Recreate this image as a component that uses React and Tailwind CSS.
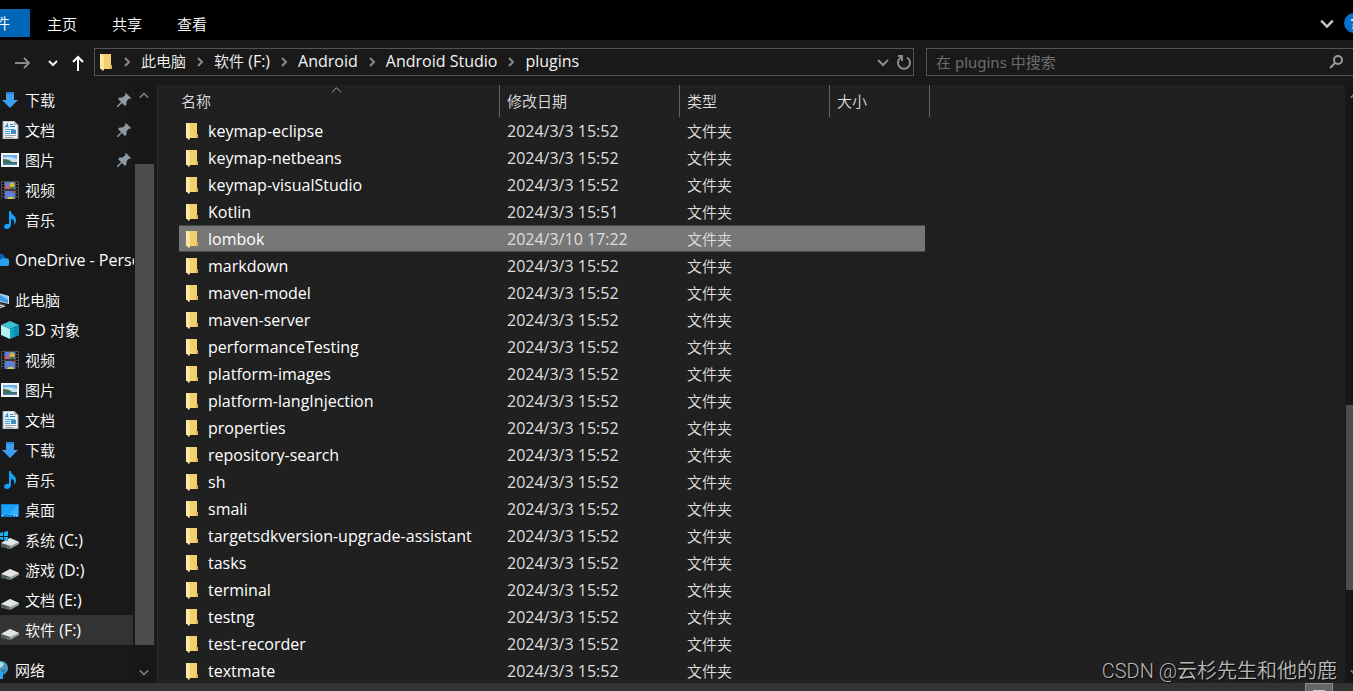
import { useState } from "react";

/* ── Icons ── */
const FolderI = () => (
  <svg width={14} height={18} viewBox="0 0 14 18" className="block shrink-0">
    <path d="M1 1h11v11h1v4H1z" fill="#f3cf6d"/>
    <path d="M1 1h3l1 14-1 3-3-3z" fill="#fde9a6"/>
    <path d="M11 12h2v4h-2z" fill="#dcb257"/>
    <path d="M4 3l1 1v12l-1 2-1-2z" fill="#ffe49a"/>
  </svg>
);
const DownloadI = () => (
  <svg width={18} height={18} viewBox="0 0 18 18">
    <path d="M5 1h8v8h4l-8 8-8-8h4z" fill="#3f9df0"/>
    <path d="M5 1h8v2H5z" fill="#2c83d8"/>
  </svg>
);
const DocI = () => (
  <svg width={18} height={18} viewBox="0 0 18 18">
    <path d="M2 0h11l4 4v14H2z" fill="#eef2f4"/>
    <path d="M2 0h11l4 4v14H2z" fill="none" stroke="#9aa3a8"/>
    <path d="M13 0v4h4z" fill="#a9b3b8"/>
    <path d="M4 6.5L6.500 2.500 7 6.500M5 5.500h2M9 3.500h3M9 5.500h5" stroke="#2384d6" fill="none"/>
    <path d="M4 8.500h10M4 10.500h5M4 12.500h5" stroke="#44a0df"/>
    <path d="M10 9h5v4h-5z" fill="#3f8fbe"/>
    <path d="M4 14.500h11M4 16.500h8" stroke="#99a2a7"/>
  </svg>
);
const PictureI = () => (
  <svg width={18} height={18} viewBox="0 0 18 18">
    <path d="M0 2h18v14H0z" fill="#f4f5f5"/>
    <path d="M2 4h14v10H2z" fill="#6aaeea"/>
    <path d="M2 7q5-3 14 1v3H2z" fill="#c6e2f3"/>
    <path d="M2 8q6 0 9 3h5v2H2z" fill="#3e7158"/>
    <path d="M2 12.500h14V14H2z" fill="#457fb8"/>
  </svg>
);
const VideoI = () => (
  <svg width={18} height={18} viewBox="0 0 18 18">
    <path d="M0 0h18v18H0z" fill="#4a4a4a"/>
    <path d="M2 1v17M16 1v17" stroke="#151515" strokeWidth={2} strokeDasharray="2 1"/>
    <path d="M4 1h10v7H4zM4 10h10v8H4z" fill="#5580de"/>
    <circle cx="11" cy="4" r="2.500" fill="#d9b52c"/>
    <path d="M4 5h4v3H4z" fill="#e2565f"/>
    <path d="M9 6h4v2H9z" fill="#3c7a36"/>
    <path d="M11 10h3l-2 3z" fill="#d1452d"/>
    <path d="M6 18q2-3 4-2 2-1 3 2z" fill="#e8c33d"/>
    <path d="M4 9h10" stroke="#222"/>
  </svg>
);
const MusicI = () => (
  <svg width={18} height={18} viewBox="0 0 18 18">
    <path d="M8 0h2c0 4 5 4 5 9 0 2-1 4-2 5 1-4-1-6-3-6v6c0 2-2 4-4 4s-3-1-3-2.500C3 13.500 6 12 8 13z" fill="#16a0f5"/>
  </svg>
);
const CloudI = () => (
  <svg width={18} height={18} viewBox="0 0 18 18">
    <path d="M0 8a5 5 0 0 1 8-5c4-1 6 2 6 5L3 14z" fill="#0a63b8"/>
    <path d="M4 15l5-6c3-3 10-2 10 2a4 4 0 0 1-4 4z" fill="#28a0ec"/>
  </svg>
);
const PcI = () => (
  <svg width={18} height={18} viewBox="0 0 18 18">
    <path d="M0 0l18 5v8L0 9z" fill="#d7dde1"/>
    <path d="M0 1l17 5v6L0 8z" fill="#3a9be6"/>
    <path d="M8 3l9 3v3z" fill="#8fcaf5"/>
    <path d="M5 12l10 3-7 3-8-2z" fill="#c9ced2"/>
    <path d="M3 14l8 2M7 12l7 2" stroke="#4d5356"/>
  </svg>
);
const CubeI = () => (
  <svg width={18} height={18} viewBox="0 0 18 18">
    <path d="M9 0l9 4-9 4-9-4z" fill="#3cc0d3"/>
    <path d="M0 4l9 4v10l-9-4z" fill="#b8eff3"/>
    <path d="M18 4l-9 4v10l9-4z" fill="#0fa6c9"/>
    <path d="M13 6l5-2v10l-5 2z" fill="#0b8fb8"/>
  </svg>
);
const DesktopI = () => (
  <svg width={18} height={18} viewBox="0 0 18 18">
    <path d="M0 3h18v13H0z" fill="#0a84d8"/>
    <path d="M1 4h16v10H1z" fill="#1ba1f8"/>
    <path d="M17 4v10H7z" fill="#38b2fc"/>
    <path d="M1 14.500h1M13 14.500h1M15 14.500h1" stroke="#fff"/>
  </svg>
);
const DriveI = () => (
  <svg width={18} height={18} viewBox="0 0 18 18" className="overflow-visible">
    <path d="M0 13l9-5 9 4v2l-9 5-9-3z" fill="#9b9fa1"/>
    <path d="M0 13l9-5 9 4-9 4z" fill="#e2e4e5"/>
    <path d="M0 13l9 3v3l-9-2z" fill="#55595b"/>
    <path d="M6 17h2" stroke="#3fd16b" strokeWidth={1}/>
  </svg>
);
const SysDriveI = () => (
  <svg width={18} height={18} viewBox="0 0 18 18" className="overflow-visible">
    <path d="M0 12l9-5 9 4v2l-9 5-9-3z" fill="#9b9fa1"/>
    <path d="M0 12l9-5 9 4-9 4z" fill="#e2e4e5"/>
    <path d="M0 12l9 3v3l-9-2z" fill="#55595b"/>
    <path d="M6 16h2" stroke="#3fd16b" strokeWidth={1}/>
    <path d="M-1 2l3-1v4h-3zM3 1l4-1v5H3zM-1 6h3v3l-3-1zM3 6h4v4l-4-1z" fill="#19b5f2"/>
  </svg>
);
const NetI = () => (
  <svg width={18} height={18} viewBox="0 0 18 18">
    <circle cx="10" cy="7" r="7" fill="#4a9bc4"/>
    <path d="M7 2q4-2 6 1l-2 3-4 1z" fill="#b5dced"/>
    <path d="M11 8l4 1-2 4-3-1z" fill="#2c7ba6"/>
    <path d="M4 10l8 1v7H4z" fill="#27a5f3"/>
  </svg>
);
const PinI = () => (
  <svg width={14} height={14} viewBox="0 0 14 14">
    <path d="M9 0l5 5-1 1-1-.5-2.500 3v3L8 13 5 10 1 14H0v-1l4-4-3-3 1.500-1.500h3l3-2.500L8 1z" fill="#8e9aa4"/>
  </svg>
);
const Chevron = ({ d, size = 12, w = 2 }) => (
  <svg width={size} height={size} viewBox="0 0 12 12" fill="none" stroke="currentColor" strokeWidth={w} className="block shrink-0">
    <path d={d}/>
  </svg>
);
const DOWN = "M1 4l5 5 5-5";
const UP = "M1 8l5-5 5 5";
const RIGHT = "M4 2l4 4-4 4";
const ArrowRightI = () => (
  <svg width={16} height={14} viewBox="0 0 16 14" fill="none" stroke="currentColor" strokeWidth={2}>
    <path d="M0 7h14M9 2l5 5-5 5"/>
  </svg>
);
const ArrowUpI = () => (
  <svg width={12} height={16} viewBox="0 0 12 16" fill="none" stroke="currentColor" strokeWidth={2}>
    <path d="M6 16V2M1 7l5-5 5 5"/>
  </svg>
);
const RefreshI = () => (
  <svg width={14} height={16} viewBox="0 0 14 16" fill="none" stroke="currentColor" strokeWidth={2}>
    <path d="M10 3.500a6 6 0 1 1-6 0M1 2h4v5"/>
  </svg>
);
const SearchI = () => (
  <svg width={14} height={14} viewBox="0 0 14 14" fill="none" stroke="currentColor" strokeWidth={2}>
    <circle cx="9" cy="5" r="4"/>
    <path d="M6 8l-5 5"/>
  </svg>
);

/* ── Data ── */
const NAV_GROUPS = [
  { items: [
    { name:"下载", Icon:DownloadI, pinned:true },
    { name:"文档", Icon:DocI, pinned:true },
    { name:"图片", Icon:PictureI, pinned:true },
    { name:"视频", Icon:VideoI },
    { name:"音乐", Icon:MusicI },
  ] },
  { items: [{ name:"OneDrive - Personal", Icon:CloudI, root:true }] },
  { items: [
    { name:"此电脑", Icon:PcI, root:true },
    { name:"3D 对象", Icon:CubeI },
    { name:"视频", Icon:VideoI },
    { name:"图片", Icon:PictureI },
    { name:"文档", Icon:DocI },
    { name:"下载", Icon:DownloadI },
    { name:"音乐", Icon:MusicI },
    { name:"桌面", Icon:DesktopI },
    { name:"系统 (C:)", Icon:SysDriveI },
    { name:"游戏 (D:)", Icon:DriveI },
    { name:"文档 (E:)", Icon:DriveI },
    { name:"软件 (F:)", Icon:DriveI, current:true },
  ] },
  { items: [{ name:"网络", Icon:NetI, root:true }] },
];

const CRUMBS = ["此电脑", "软件 (F:)", "Android", "Android Studio", "plugins"];

const DEFAULT_DATE = "2024/3/3 15:52";
const FOLDERS = [
  { name:"keymap-eclipse" },
  { name:"keymap-netbeans" },
  { name:"keymap-visualStudio" },
  { name:"Kotlin", date:"2024/3/3 15:51" },
  { name:"lombok", date:"2024/3/10 17:22" },
  { name:"markdown" },
  { name:"maven-model" },
  { name:"maven-server" },
  { name:"performanceTesting" },
  { name:"platform-images" },
  { name:"platform-langInjection" },
  { name:"properties" },
  { name:"repository-search" },
  { name:"sh" },
  { name:"smali" },
  { name:"targetsdkversion-upgrade-assistant" },
  { name:"tasks" },
  { name:"terminal" },
  { name:"testng" },
  { name:"test-recorder" },
  { name:"textmate" },
];

/* Latin runs are set one step larger and heavier than the Chinese around them */
function Label({ text }) {
  return (
    <span className="whitespace-pre">
      {text.split(/([ -~]+)/).filter(Boolean).map((part, i) => (
        /^[ -~]/.test(part)
          ? <span key={i} className="text-[16px] font-normal">{part}</span>
          : part
      ))}
    </span>
  );
}

/* ── Ribbon tabs ── */
function Ribbon() {
  return (
    <div className="flex h-10 shrink-0 items-center justify-between bg-black pt-1.5">
      <div className="flex h-7 items-center">
        <button className="mr-2 flex h-7 w-[30px] items-center justify-end overflow-hidden whitespace-nowrap bg-[#0067b8] pr-5">文件</button>
        {["主页", "共享", "查看"].map(t => (
          <button key={t} className="w-[65px] pt-0.5 pl-[9px] text-left">{t}</button>
        ))}
      </div>
      <div className="flex items-center gap-2.5 overflow-hidden">
        <button aria-label="展开功能区" className="text-[#c8c8c8]"><Chevron d={DOWN} size={14}/></button>
        <button aria-label="帮助" className="-mr-[11px] flex size-5 items-center justify-center rounded-full bg-[#0a70ce] font-semibold">?</button>
      </div>
    </div>
  );
}

/* ── Navigation buttons, path and search ── */
function AddressBar() {
  return (
    <div className="flex h-[45px] shrink-0 items-center bg-[#191919] pb-0.5">
      <div className="flex w-[94px] shrink-0 items-center pt-0.5 pl-[15px]">
        <button aria-label="前进" className="text-[#8a8a8a]"><ArrowRightI/></button>
        <button aria-label="最近位置" className="ml-4 text-[#f0f0f0]"><Chevron d="M2 4l4 4 4-4"/></button>
        <button aria-label="上移" className="ml-[13px] text-white"><ArrowUpI/></button>
      </div>
      <nav className="flex h-7 w-[820px] min-w-0 items-center border border-[#535353] pl-1">
        <FolderI/>
        {CRUMBS.map(c => (
          <span key={c} className="flex items-center whitespace-nowrap">
            <span className="mx-2 text-[#8a8a8a]"><Chevron d={RIGHT}/></span>
            <a href="#" className="pb-0.5 text-[#f4f4f4]"><Label text={c}/></a>
          </span>
        ))}
        <span className="flex-1"/>
        <button aria-label="历史记录" className="mr-2 text-[#8a8a8a]"><Chevron d={DOWN}/></button>
        <button aria-label="刷新" className="mr-0.5 text-[#8a8a8a]"><RefreshI/></button>
      </nav>
      <label className="ml-3 flex h-7 flex-1 items-center border border-r-0 border-[#535353] px-[9px]">
        <input type="search" aria-label="搜索" placeholder="在 plugins 中搜索"
          className="min-w-0 flex-1 bg-transparent font-['Noto_Sans','Noto_Sans_CJK_SC',sans-serif] font-normal outline-none placeholder:text-[#6d6d6d]"/>
        <span className="pr-px text-[#9a9a9a]"><SearchI/></span>
      </label>
    </div>
  );
}

function NavItem({ item }) {
  const { name, Icon, pinned, root, current } = item;
  return (
    <a href="#" className={`flex h-[30px] items-center whitespace-nowrap ${root ? "-ml-[9px]" : "pl-px"} ${current ? "mr-px bg-[#333333]" : ""}`}>
      <span className="mr-1.5 shrink-0"><Icon/></span>
      <span className="flex-1"><Label text={name}/></span>
      {pinned && <span className="mr-[3px] shrink-0"><PinI/></span>}
    </a>
  );
}

/* ── Left pane ── */
function Sidebar() {
  return (
    <aside className="flex w-[158px] shrink-0 border-r border-[#2b2b2b] bg-[#191919]">
      <div className="flex w-[134px] shrink-0 flex-col gap-2.5 overflow-hidden">
        {NAV_GROUPS.map((g, i) => (
          <div key={i}>
            {g.items.map(item => <NavItem key={item.name} item={item}/>)}
          </div>
        ))}
      </div>
      <div className="flex w-5 flex-col items-center bg-[#171717] py-1.5 text-[#7a7a7a]">
        <Chevron d={UP} size={10}/>
        <div className="mt-[63px] h-[481px] w-[19px] bg-[#4d4d4d]"/>
        <span className="flex-1"/>
        <Chevron d={DOWN} size={10}/>
      </div>
    </aside>
  );
}

/* ── Folder list ── */
function FileTable({ selected, onSelect }) {
  return (
    <table className="w-[751px] table-fixed border-separate border-spacing-0 text-left">
      <colgroup>
        <col className="w-[321px]"/>
        <col className="w-[180px]"/>
        <col className="w-[150px]"/>
        <col className="w-[95px]"/>
        <col className="w-[5px]"/>
      </colgroup>
      <thead>
        <tr className="h-8 text-[#dedede]">
          <th className="relative border-r border-[#636363] p-0 pl-0.5 font-[350]">
            名称
            <span className="absolute top-0 left-[152px] text-[#b0b0b0]"><Chevron d={UP} size={11} w={1}/></span>
          </th>
          <th className="border-r border-[#636363] p-0 pl-[7px] font-[350]">修改日期</th>
          <th className="border-r border-[#636363] p-0 pl-[7px] font-[350]">类型</th>
          <th colSpan={2} className="border-r border-[#636363] p-0 pl-[7px] font-[350]">大小</th>
        </tr>
      </thead>
      <tbody>
        {FOLDERS.map(f => {
          const on = f.name === selected;
          const cell = on ? "border-y border-[#4a4a4a] bg-[#777777]" : "";
          return (
            <tr key={f.name} className="h-[27px] text-[#dedede]" onClick={() => onSelect(f.name)}>
              <td className={`p-0 pl-1.5 text-[16px] font-normal text-white ${cell}`}>
                <span className="flex items-center gap-[9px]"><FolderI/>{f.name}</span>
              </td>
              <td className={`p-0 pl-[7px] text-[16px] font-normal ${cell}`}>{f.date || DEFAULT_DATE}</td>
              <td className={`p-0 pl-[7px] ${cell}`}>文件夹</td>
              <td className={`p-0 ${cell}`}/>
              <td className="p-0"/>
            </tr>
          );
        })}
      </tbody>
    </table>
  );
}

export default function App() {
  const [selected, setSelected] = useState("lombok");

  return (
    <div className="relative flex h-screen flex-col overflow-hidden bg-[#191919] font-['Open_Sans','Noto_Sans_CJK_SC',sans-serif] text-[15px] font-[350] leading-5 text-white">
      <Ribbon/>
      <AddressBar/>
      <div className="flex min-h-0 flex-1">
        <Sidebar/>
        <main className="min-w-0 flex-1 overflow-hidden bg-[#202020] pl-[21px]">
          <FileTable selected={selected} onSelect={setSelected}/>
        </main>
        <div className="flex w-2 shrink-0 flex-col overflow-hidden bg-[#171717] py-1.5 pl-px text-[#7a7a7a]">
          <span className="pl-1"><Chevron d={UP} size={10}/></span>
          <div className="mt-[304px] h-[185px] bg-[#4d4d4d]"/>
          <span className="flex-1"/>
          <span className="pl-1"><Chevron d={DOWN} size={10}/></span>
        </div>
      </div>
      <footer className="flex h-2 shrink-0 justify-end overflow-hidden bg-[#333333] pr-5">
        <button aria-label="详细信息" className="flex h-5 w-7 justify-center border border-[#8f8f8f] bg-[#666666] pt-1.5">
          <span className="h-px w-3 bg-[#cccccc]"/>
        </button>
      </footer>
      <div className="absolute right-4 bottom-1.5 font-['Roboto','Noto_Sans_CJK_SC',sans-serif] text-[20px] leading-7 text-[#b9b9b9] [text-shadow:1px_1px_1px_#000]">CSDN @云杉先生和他的鹿</div>
    </div>
  );
}
